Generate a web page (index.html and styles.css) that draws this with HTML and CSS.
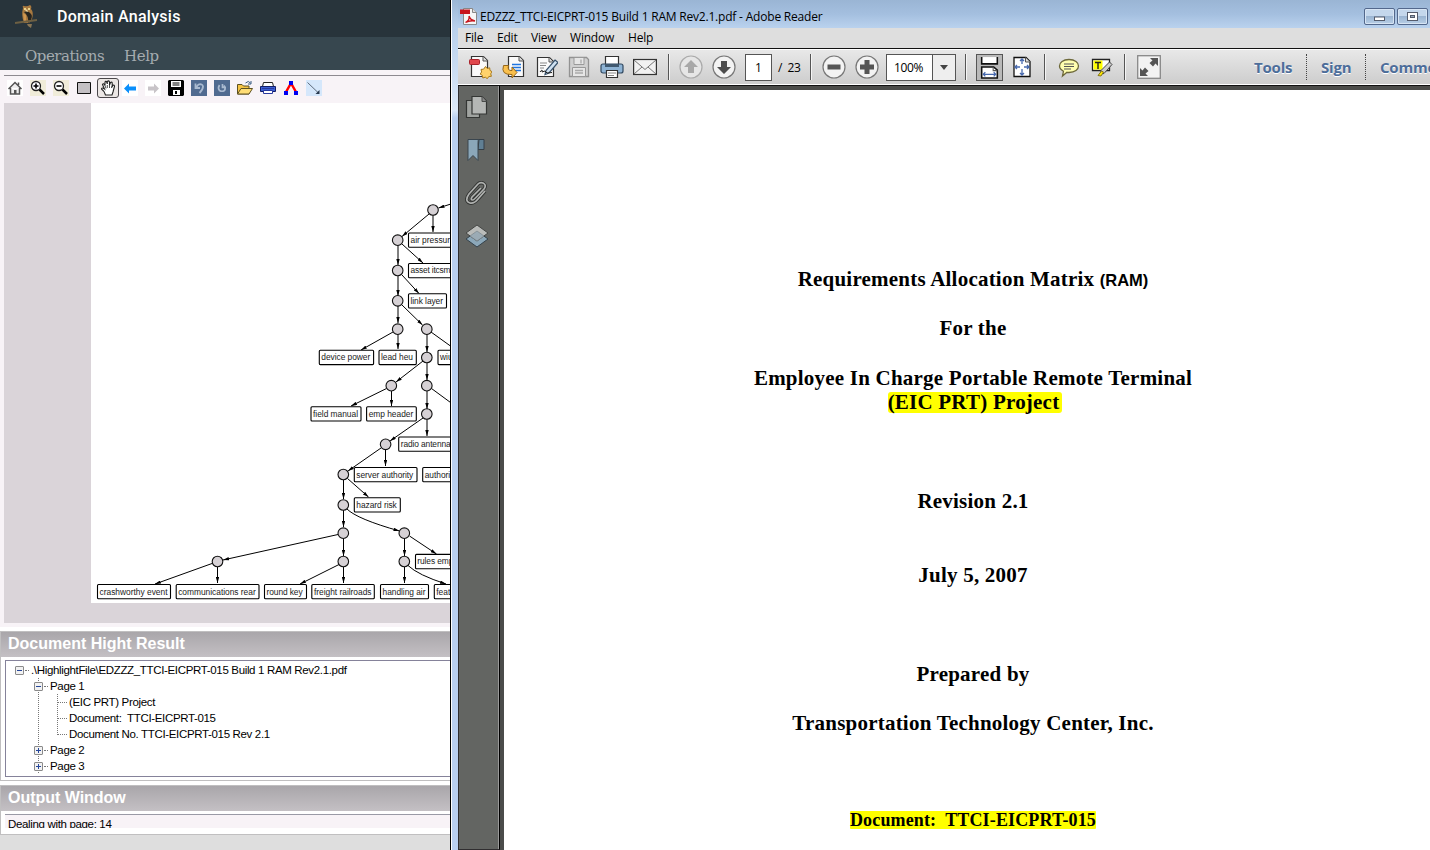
FILE: index.html
```html
<!DOCTYPE html>
<html lang="en">
<head>
<meta charset="utf-8">
<title>Domain Analysis</title>
<link rel="stylesheet" href="styles.css">
</head>
<body>
<div class="desktop">
<section class="app">
  <header class="app-title">
    <svg class="owl" width="24" height="24" viewBox="0 0 24 24"><path d="M8 3q-1-3 1-2 3 1 6-1 2 1 1 4 3 3 1 10l-3 4H9Q6 10 8 3" fill="#a8793f"/><path d="M12 6q7 3 4 9l-3 3q1-7-4-11" fill="#272520"/><path d="M8 8l3 2v7l-2-1" fill="#d09750"/><path d="M9 4h2M13 4h2" stroke="#fff0a0" stroke-width="1.5"/><path d="M10 6l2-2 1 3" fill="#ead6a4"/><path d="M0 18l7-1 8-1 7-1" stroke="#6e6043" stroke-width="1.8" fill="none"/><path d="M12 19h5l-1 4-3-2" fill="#8a7655"/></svg>
    <h1>Domain Analysis</h1>
  </header>
  <nav class="app-menu"><span class="m-op">Operations</span><span class="m-help">Help</span></nav>
  <div class="app-tools">
    <i><svg viewBox="0 0 16 16"><path fill="#fff" d="M0 0h16v16H0z"/><path d="M1.500 9L8 2.500 14.500 9M3.500 8v6h9V8M11.500 5V2.500" fill="#eee" stroke="#555" stroke-width="1.500"/><path d="M7 14v-4h2.500v4" fill="#555"/></svg></i>
    <i><svg viewBox="0 0 16 16"><path fill="#f0ecd9" d="M0 0h16v16H0z"/><circle cx="6" cy="6" r="4.500" fill="#fff" stroke="#222" stroke-width="1.300"/><path d="M3.500 6h5M6 3.500v5" stroke="#000" stroke-width="1.600"/><path d="M9.500 9.500L14 14" stroke="#000" stroke-width="2.500"/></svg></i>
    <i><svg viewBox="0 0 16 16"><path fill="#f0ecd9" d="M0 0h16v16H0z"/><circle cx="6" cy="6" r="4.500" fill="#fff" stroke="#222" stroke-width="1.300"/><path d="M3.500 6h5" stroke="#000" stroke-width="1.600"/><path d="M9.500 9.500L14 14" stroke="#000" stroke-width="2.500"/></svg></i>
    <i><svg viewBox="0 0 16 16"><path d="M1.500 2.500h13v11h-13z" fill="#c4c0c4" stroke="#111"/></svg></i>
    <i class="pressed"><svg viewBox="0 0 16 16"><path d="M5.500 15q-1-4-4-6 0-2 3 0L2.500 4.500q1-2 2.500 1L5 2q1.500-2 2.300 2V1.500q1.600-1.500 2.200.5v3l1-2.500q2-1 1.700 1v3l1-1.500q2 0 1 2.500L13 12l-1 3z" fill="#fff" stroke="#222" stroke-width="1.100"/><path d="M5 5.500l1 3M7.300 5v3M9.500 5v3M12 6l-.5 2" stroke="#222" stroke-width=".8"/></svg></i>
    <i><svg viewBox="0 0 16 16"><path fill="#fff" d="M0 0h16v16H0z"/><path d="M2 8.500l5-5v3h7v4H7v3z" fill="#0a8ffb"/></svg></i>
    <i><svg viewBox="0 0 16 16"><path fill="#fff" d="M0 0h16v16H0z"/><path d="M14 8.500l-5-5v3H3v4h6v3z" fill="#c8c4c8"/></svg></i>
    <i><svg viewBox="0 0 16 16"><path d="M1 0h14l1 1v14l-1 1H1l-1-1V1z" fill="#000"/><path d="M3 1h10v6H3zM5 10h7v5H5z" fill="#fff"/><path d="M4.500 3h7M4.500 5h7" stroke="#000"/><path d="M7 11h2v3H7z" fill="#000"/></svg></i>
    <i><svg viewBox="0 0 16 16"><path fill="#506b90" d="M0 0h16v16H0z"/><path d="M4.500 3.500V8H9M5 7.500l2.500-3q4-1 4.500 2 0 3-3.500 6.500" fill="none" stroke="#a9bad0" stroke-width="1.800"/></svg></i>
    <i><svg viewBox="0 0 16 16"><path fill="#506b90" d="M0 0h16v16H0z"/><path d="M8.500 4v3.500H12M5.500 5q-2 3 0 5.500 2.500 1.500 5 0Q12 8 10 5.500" fill="none" stroke="#a9bad0" stroke-width="1.700"/></svg></i>
    <i><svg viewBox="0 0 16 16"><path d="M.5 14V4.500H5L6.500 6H12v8z" fill="#f6c444" stroke="#5e5122"/><path d="M.5 14L4 8.500h11.500L12 14z" fill="#ffdd75" stroke="#5e5122"/><path d="M8.500 3q3-3 5 0M14 1v3h-3" fill="none" stroke="#375b82"/></svg></i>
    <i><svg viewBox="0 0 16 16"><path d="M3.500 2.500h9l1 4h-11z" fill="#fff" stroke="#222"/><path d="M.5 6.500h15v5H.5z" fill="#3b5fd4" stroke="#141e66"/><path d="M3.500 10.500h9v3h-9zM2 8.500h12" fill="#fff" stroke="#28399e"/></svg></i>
    <i><svg viewBox="0 0 16 16"><path d="M7.500 4L3 12M8.500 4l4.500 8" stroke="#f00" stroke-width="2.500"/><path d="M6 1h4v4H6zM1 11h4v4H1zM11 11h4v4h-4z" fill="#0000f2"/></svg></i>
    <i><svg viewBox="0 0 16 16"><path fill="#d5e7fb" d="M0 0h16v16H0z"/><path d="M1.500 2.500l11 10.500" stroke="#5d6b7d"/><path d="M13.500 10v4h-4z" fill="#27384e"/></svg></i>
  </div>
  <div class="canvas">
    <svg class="graph" width="359" height="500" viewBox="91 103 359 500">
      <defs><marker id="a" viewBox="0 0 7 4" refX="7" refY="2" markerWidth="6" markerHeight="3.500" markerUnits="userSpaceOnUse" orient="auto"><path d="M0 0l7 2-7 2z"/></marker></defs>
      <rect x="91" y="103" width="359" height="500" fill="#fff"/>
      <g class="edges">
        <path d="M454 203L438.500 208"/><path d="M429 214L402 236.500"/><path d="M433 215v17"/>
        <path d="M398 245v20"/><path d="M402 244l21 19"/><path d="M398 276v20"/><path d="M402 275l17 18.500"/>
        <path d="M398 306v17"/><path d="M402 305l20.500 20"/><path d="M393 332l-32 18"/><path d="M398 334v15"/>
        <path d="M427 334v18"/><path d="M431 332l25 18"/><path d="M423 361l-27 21"/><path d="M427 363v17"/>
        <path d="M386.500 388.500L351 406"/><path d="M391.500 391v15"/><path d="M427 391v18"/><path d="M431.500 388.500L458 408"/>
        <path d="M423 418l-33 23"/><path d="M427 419v17"/><path d="M381 448l-33 23"/><path d="M385.500 450v16"/>
        <path d="M343.500 480v19"/><path d="M347.500 478.500l21 18.500"/><path d="M343.500 510v17"/><path d="M347 509Q357 519 399.500 531"/>
        <path d="M338 534.500L223 560"/><path d="M343.500 538v18"/><path d="M404.500 538v18"/><path d="M409.500 536l27 18"/>
        <path d="M212 563.500L155 584"/><path d="M217.500 567v16"/><path d="M339 564.500L300 584"/><path d="M343.500 567v16"/><path d="M404.500 567v16"/><path d="M408 565.500Q418 575 446 584"/>
      </g>
      <g class="nodes">
        <circle cx="433" cy="210" r="5.300"/><circle cx="397.700" cy="240.200" r="5.300"/><circle cx="397.700" cy="270.500" r="5.300"/><circle cx="397.700" cy="300.800" r="5.300"/><circle cx="397.700" cy="329.200" r="5.300"/><circle cx="426.800" cy="329.200" r="5.300"/><circle cx="426.800" cy="357.500" r="5.300"/><circle cx="391.300" cy="385.700" r="5.300"/><circle cx="426.800" cy="385.700" r="5.300"/><circle cx="426.800" cy="414" r="5.300"/><circle cx="385.600" cy="444.300" r="5.300"/><circle cx="343.300" cy="474.500" r="5.300"/><circle cx="343.300" cy="505" r="5.300"/><circle cx="343.300" cy="533.200" r="5.300"/><circle cx="404.300" cy="533.200" r="5.300"/><circle cx="343.300" cy="561.500" r="5.300"/><circle cx="404.300" cy="561.500" r="5.300"/><circle cx="217.500" cy="561.500" r="5.300"/>
      </g>
      <g class="boxes">
        <rect x="408.500" y="233" width="60" height="14.300" rx="1"/><rect x="408.500" y="263.500" width="60" height="14.300" rx="1"/><rect x="408.500" y="293.700" width="38" height="14.300" rx="1"/>
        <rect x="319.300" y="350.300" width="54.300" height="14.300" rx="1"/><rect x="379" y="350.300" width="37.300" height="14.300" rx="1"/><rect x="438" y="350.300" width="40" height="14.300" rx="1"/>
        <rect x="311" y="406.700" width="50" height="14.300" rx="1"/><rect x="366.600" y="406.700" width="49.700" height="14.300" rx="1"/>
        <rect x="398.700" y="437" width="60" height="14.300" rx="1"/><rect x="354.300" y="467.500" width="62.700" height="14.300" rx="1"/><rect x="422.700" y="467.500" width="50" height="14.300" rx="1"/>
        <rect x="354.300" y="497.700" width="46" height="14.300" rx="1"/><rect x="415.500" y="554.400" width="60" height="14.300" rx="1"/>
        <rect x="97.500" y="584.500" width="73" height="14.300" rx="1"/><rect x="176.200" y="584.500" width="82.800" height="14.300" rx="1"/><rect x="264.500" y="584.500" width="42" height="14.300" rx="1"/><rect x="311.800" y="584.500" width="62.500" height="14.300" rx="1"/><rect x="380.500" y="584.500" width="48" height="14.300" rx="1"/><rect x="434.300" y="584.500" width="50" height="14.300" rx="1"/>
      </g>
      <g class="labels">
        <text x="410.500" y="243" textLength="39.500">air pressur</text><text x="410.500" y="273.300" textLength="40">asset itcsm</text><text x="410.500" y="303.600" textLength="32.500">link layer</text>
        <text x="321.300" y="360.200" textLength="49">device power</text><text x="381" y="360.200" textLength="32">lead heu</text><text x="440" y="360.200">wiu</text>
        <text x="313" y="416.700" textLength="45">field manual</text><text x="368.700" y="416.700" textLength="44.500">emp header</text><text x="400.700" y="447" textLength="50">radio antenna</text>
        <text x="356.300" y="477.500" textLength="57">server authority</text><text x="424.700" y="477.500" textLength="25.500">authori</text><text x="356.300" y="507.700" textLength="40.500">hazard risk</text><text x="417.300" y="564.300" textLength="36">rules emp</text>
        <text x="99.500" y="594.500" textLength="68">crashworthy event</text><text x="178.200" y="594.500" textLength="77.500">communications rear</text><text x="266.600" y="594.500" textLength="36">round key</text><text x="314" y="594.500" textLength="57.500">freight railroads</text><text x="382.500" y="594.500" textLength="43">handling air</text><text x="436.300" y="594.500">feat</text>
      </g>
    </svg>
  </div>
  <section class="panel results">
    <h2>Document Hight Result</h2>
    <div class="tree">
      <div class="row lv0"><b class="box"></b><u></u><span>.\HighlightFile\EDZZZ_TTCI-EICPRT-015 Build 1 RAM Rev2.1.pdf</span></div>
      <div class="branch">
        <div class="row"><b class="box"></b><u></u><span>Page 1</span></div>
        <div class="leaves">
          <div class="row leaf"><u></u><span>(EIC PRT) Project</span></div>
          <div class="row leaf"><u></u><span>Document:&nbsp; TTCI-EICPRT-015</span></div>
          <div class="row leaf"><u></u><span>Document No. TTCI-EICPRT-015 Rev 2.1</span></div>
        </div>
        <div class="row"><b class="box plus"></b><u></u><span>Page 2</span></div>
        <div class="row"><b class="box plus"></b><u></u><span>Page 3</span></div>
      </div>
    </div>
  </section>
  <section class="panel output">
    <h2>Output Window</h2>
    <div class="log">Dealing with page: 14</div>
  </section>
  <div class="app-foot"></div>
</section>

<section class="reader">
  <div class="frame"></div>
  <div class="window">
    <header class="titlebar">
      <svg width="17" height="17" viewBox="0 0 17 17"><path d="M3.500.5h9l4 4v12h-13z" fill="#f6f6f6" stroke="#888"/><path d="M12.500.5v4h4" fill="#ddd" stroke="#888"/><path d="M0 1.500h10v4.500H0z" fill="#c8141c"/><path d="M5.500 14.500q4.500-2.500 3.500-6.500 1 4 6 5-5-1-9.500 1.500" fill="none" stroke="#c8141c" stroke-width="1.400"/></svg>
      <span class="caption">EDZZZ_TTCI-EICPRT-015 Build 1 RAM Rev2.1.pdf - Adobe Reader</span>
      <span class="winbtn"><svg width="29" height="15" viewBox="0 0 29 15"><rect x="9.500" y="8" width="10" height="3.500" fill="#fff" stroke="#555c6c"/></svg></span>
      <span class="winbtn"><svg width="29" height="15" viewBox="0 0 29 15"><rect x="9.500" y="3.500" width="10" height="8" fill="#fff" stroke="#555c6c"/><rect x="12.500" y="6.500" width="4" height="2" fill="#9ab" stroke="#555c6c"/></svg></span>
    </header>
    <nav class="menubar"><span>File</span><span>Edit</span><span>View</span><span>Window</span><span>Help</span></nav>
    <div class="toolbar">
      <i class="t"><svg viewBox="0 0 24 24"><path d="M3.500 1.500h12l4 4v16h-16z" fill="#fafafa" stroke="#333" stroke-width="1.200"/><path d="M15 1.500v4.500h4.500" fill="#ddd" stroke="#555"/><rect x="1.500" y="4.500" width="10" height="5" rx="1" fill="#e0474d" stroke="#a8222a"/><path d="M17.500 11.500l1.700 2 2.500-.7.300 2.600 2.200 1.400-1.500 2 .7 2.500-2.600.2-1.500 2.200-2-1.500-2.500.8-.4-2.600-2.200-1.300 1.400-2.200-.6-2.500 2.600-.2z" fill="#ffd26b" stroke="#a87a1e"/></svg></i>
      <i class="t"><svg viewBox="0 0 24 24"><path d="M7.500 1.500h11l4 4v16h-15z" fill="#fafafa" stroke="#333" stroke-width="1.200"/><path d="M18 1.500v4.500h4.500" fill="#ddd" stroke="#555"/><path d="M11 9.500h9M11 12.500h9M11 15.500h9" stroke="#1f75e0" stroke-width="1.500"/><path d="M2.500 10.500h5q-1.500 5.500 3.500 5v-3.500l5 5.500-5 5.500v-3.500Q-.5 20 2.500 10.500" fill="#f9c04e" stroke="#96671a"/></svg></i>
      <i class="t"><svg viewBox="0 0 24 24"><path d="M3.500 2.500h12l4 4v15h-16z" fill="#fafafa" stroke="#333" stroke-width="1.200"/><path d="M15 2.500v4.500h4" fill="#ddd" stroke="#555"/><path d="M6 8h7M6 10.500h6M6 13h4" stroke="#888"/><path d="M21 5l3 2.500-9 10.500-4 1.500 1-4z" fill="#d0e2f2" stroke="#37516b" stroke-width="1.200"/><path d="M6 17q3-4 2 0l3-1 2 2 5-.5" fill="none" stroke="#222"/></svg></i>
      <i class="t"><svg viewBox="0 0 24 24"><path d="M2.500 2.500h17l2 2v17h-19z" fill="#d0d0d0" stroke="#929292" stroke-width="1.300"/><path d="M7 2.500h10v7H7zM5.500 12.500h13v9h-13z" fill="#e6e6e6" stroke="#999"/><path d="M14 4.500v4M8 15.500h8M8 18h8" stroke="#aaa" stroke-width="1.300"/></svg></i>
      <i class="t"><svg viewBox="0 0 24 24"><path d="M5.500 10V1.500h13V10" fill="#fff" stroke="#333" stroke-width="1.200"/><rect x="1" y="9" width="22" height="9" rx="2" fill="#8eb3d4" stroke="#304860" stroke-width="1.200"/><path d="M5 9h14v3H5z" fill="#405970"/><path d="M6.500 15.500h11v7h-11z" fill="#fff" stroke="#333" stroke-width="1.200"/><path d="M8 18h8M8 20.500h6" stroke="#888"/></svg></i>
      <i class="t"><svg viewBox="0 0 24 24"><rect x=".6" y="4.500" width="22.800" height="15" fill="#f2f2f2" stroke="#333" stroke-width="1.200"/><path d="M1 5l11 9.500L23 5M1 19l8-7M23 19l-8-7" fill="none" stroke="#777"/></svg></i>
      <s class="s1"></s>
      <i class="t"><svg viewBox="0 0 24 24"><circle cx="12" cy="12" r="11" fill="#e6e6e6" stroke="#aaa" stroke-width="1.200"/><path d="M12 5l7 7h-4v6H9v-6H5z" fill="#a8a8a8"/></svg></i>
      <i class="t"><svg viewBox="0 0 24 24"><circle cx="12" cy="12" r="11" fill="#f3f3f3" stroke="#777" stroke-width="1.200"/><path d="M12 19l7-7h-4V6H9v6H5z" fill="#4c4c4c"/></svg></i>
      <span class="pagebox">1</span><span class="count">/&nbsp; 23</span>
      <s class="s2"></s>
      <i class="t"><svg viewBox="0 0 24 24"><circle cx="12" cy="12" r="11" fill="#f3f3f3" stroke="#777" stroke-width="1.200"/><path d="M5.500 9.500h13v5h-13z" fill="#555"/></svg></i>
      <i class="t"><svg viewBox="0 0 24 24"><circle cx="12" cy="12" r="11" fill="#f3f3f3" stroke="#777" stroke-width="1.200"/><path d="M9.500 5h5v4.500H19v5h-4.500V19h-5v-4.500H5v-5h4.500z" fill="#555"/></svg></i>
      <span class="zoombox"><span>100%</span><em><svg width="8" height="5" viewBox="0 0 8 5"><path d="M0 0h8L4 5z" fill="#444"/></svg></em></span>
      <s class="s3"></s>
      <i class="fitw"><svg viewBox="0 0 24 24"><path d="M4.500 2v6.500h15V2" fill="#fff" stroke="#111" stroke-width="1.500"/><path d="M4.500 22V11.500H16l3.500 3V22z" fill="#fff" stroke="#111" stroke-width="1.500"/><path d="M15.500 11.500v3.500h4" fill="none" stroke="#555"/><path d="M6 18.500h12M8 16.500l-2 2 2 2M16 16.500l2 2-2 2" fill="none" stroke="#4769ae" stroke-width="1.200"/></svg></i>
      <i class="t fitp"><svg viewBox="0 0 24 24"><path d="M4 2.500h12l4 4v15H4z" fill="#fff" stroke="#111" stroke-width="1.300"/><path d="M15.500 2.500v4.500H20" fill="#ddd" stroke="#555"/><path d="M12 4v5M12 14v6M5 12h5M14 12h5M10 6l2-2 2 2M10 18l2 2 2-2M7 10l-2 2 2 2M17 10l2 2-2 2" fill="none" stroke="#4769ae" stroke-width="1.300"/></svg></i>
      <s class="s4"></s>
      <i class="t cm"><svg viewBox="0 0 24 24"><path d="M12 4.500c6 0 9.500 3 9.500 6.500s-3.500 6.500-9.500 6.500q-1 0-2-.2L5.500 21l1-4.800Q2.500 14 2.500 11C2.500 7.500 6 4.500 12 4.500z" fill="#ffffb0" stroke="#6d693b" stroke-width="1.300"/><path d="M7 9h10M7 11.500h10M7 14h7" stroke="#555"/></svg></i>
      <i class="t"><svg viewBox="0 0 24 24"><path d="M2.500 4.500h17v11h-17z" fill="#fff" stroke="#222" stroke-width="1.300"/><path d="M3.500 5.500h9v9h-9z" fill="#ff0"/><path d="M5 7.500h6M8 7.500V14" stroke="#222" stroke-width="1.400"/><path d="M19.500 7l2.500 2.500-8 9-3.500.5.500-3.500z" fill="#ccc" stroke="#444"/><path d="M8 20.500l3.500-4.500 2 1-2.500 4z" fill="#ffe900" stroke="#85751a"/></svg></i>
      <s class="s5"></s>
      <i class="full"><svg viewBox="0 0 24 24"><rect x=".7" y=".7" width="22.600" height="22.600" fill="#f3f3f3" stroke="#888" stroke-width="1.300"/><path d="M13 3h8v8l-2.500-2.500-2.500 3-3.500-3.500 3-2.500zM3 21v-8l2.500 2.500 2.500-3 3.500 3.500-3 2.500L11 21z" fill="#555"/></svg></i>
      <span class="panes"><b class="p1">Tools</b><b class="p2">Sign</b><b class="p3">Comment</b></span>
    </div>
    <div class="body">
      <aside class="rail">
        <svg viewBox="0 0 24 24"><path d="M1.500 5.500h13v17h-13z" fill="#a0a3a0" stroke="#343634" stroke-width="1.200"/><path d="M7 1.500h10l4.500 4.500v13H7z" fill="#b5b7b5" stroke="#343634" stroke-width="1.200"/><path d="M17 1.500v5h4.500" fill="#888" stroke="#494b49"/></svg>
        <svg viewBox="0 0 24 24"><path d="M14 1.500h5v10h-6z" fill="#607f94" stroke="#343f48"/><path d="M3 1.500h11q-1 0-1 3v18l-5-5-5 5z" fill="#8ba7b9" stroke="#3a464f"/></svg>
        <svg viewBox="0 0 24 24"><g fill="none" stroke="#343634" stroke-width="3.500"><path d="M16 7l-9 9q-2 3 1 3 1 0 11-11 3-4-1-6-3-1-5 1L4 13q-5 7 1 9 4 1 8-4l7-8"/></g><path d="M16 7l-9 9q-2 3 1 3 1 0 11-11 3-4-1-6-3-1-5 1L4 13q-5 7 1 9 4 1 8-4l7-8" fill="none" stroke="#b0b2b0" stroke-width="1.700"/></svg>
        <svg viewBox="0 0 24 24"><path d="M12 7l11 8-11 8-11-8z" fill="#8ba7b9" stroke="#35434c"/><path d="M12 1l11 8-11 8L1 9z" fill="#babcba" stroke="#454745"/><path d="M12 7l7 5-7 5-7-5z" fill="#9babb5" stroke="#7b858c" stroke-width=".7"/></svg>
      </aside>
      <div class="docwell">
        <article class="page">
          <p>Requirements Allocation Matrix <span class="ram">(RAM)</span></p>
          <p class="g1">For the</p>
          <p class="g1">Employee In Charge Portable Remote Terminal</p>
          <p><mark>(EIC PRT) Project</mark></p>
          <p class="g3">Revision 2.1</p>
          <p class="g2">July 5, 2007</p>
          <p class="g3">Prepared by</p>
          <p class="g1">Transportation Technology Center, Inc.</p>
          <p class="docno"><mark>Document:&nbsp; TTCI-EICPRT-015</mark></p>
        </article>
      </div>
    </div>
  </div>
</section>
</div>
</body>
</html>
```
FILE: styles.css
```css
* { box-sizing: border-box; }
body { margin: 0; overflow: hidden; }
h1, h2, p { margin: 0; }
i, em { font-style: normal; }
svg { display: block; }
.desktop { display: flex; width: 1430px; height: 850px; overflow: hidden; background: #dedede; }

/* analysis application */
.app { width: 450px; flex: none; display: flex; flex-direction: column; overflow: hidden; background: #fff; font-family: "Liberation Sans", Arial, sans-serif; }
.app-title { height: 37px; flex: none; display: flex; align-items: flex-start; padding: 5px 0 0 15px; background: #28343b; }
.app-title h1 { margin-left: 18px; color: #fff; font: 500 16px/23px Roboto, sans-serif; letter-spacing: .28px; }
.app-menu { height: 33px; flex: none; display: flex; gap: 20px; padding: 9px 0 0 25px; background: #37474f; color: #a5acaf; font: 15px/20px "DejaVu Serif", serif; letter-spacing: -.4px; }
.m-op { width: 79px; letter-spacing: -.5px; }
.app-tools { height: 33px; flex: none; display: flex; align-items: center; gap: 1px; padding-bottom: 3px; border: solid #f8f3f7; border-width: 5px 0 0 4px; background: linear-gradient(#8e8a90 1px, #f8f3f7 1px) padding-box; }
.app-tools i { width: 22px; height: 20px; display: flex; align-items: center; justify-content: center; }
.app-tools i svg { width: 16px; height: 16px; }
.app-tools .pressed { border: 1px solid #4a464a; border-radius: 3px; background: #ece7e5; margin: 0 1px 0 1px; width: 22px; }
.app-tools .pressed + i { margin-left: -2px; }
.canvas { height: 524px; flex: none; padding-left: 87px; background: #dad4d9; border: solid #f8f3f7; border-width: 0 0 4px 4px; }
.edges path { fill: none; stroke: #000; stroke-width: 1; marker-end: url(#a); }
.nodes circle { fill: #d6d1d5; stroke: #111; stroke-width: 1.1; }
.boxes rect { fill: #fff; stroke: #000; stroke-width: 1.1; }
.labels { font: 8.4px "Liberation Sans", Arial, sans-serif; fill: #1a1a1a; }

.panel { flex: none; border: solid #c0bfc0; border-width: 1px 0 1px 1px; }
.panel h2 { height: 25px; padding-left: 7px; color: #fff; font: bold 16px/24px "Liberation Sans", Arial, sans-serif; background: linear-gradient(#a9a6aa, #c4c0c4); }
.results { height: 150px; margin-top: 4px; }
.tree { height: 117px; margin: 3px 0 0 4px; padding: 1px 0 0 9px; border: solid #85829a; border-width: 1px 0 1px 1px; overflow: hidden; font-size: 11.5px; line-height: 16px; letter-spacing: -.34px; color: #000; }
.row { display: flex; align-items: center; height: 16px; white-space: pre; }
.row u { width: 4px; margin: 0 3px 0 1px; border-top: 1px dotted #777; }
.box { width: 9px; height: 9px; border: 1px solid #8a8a8a; border-radius: 1px; background: linear-gradient(#26479a, #26479a) center / 5px 1px no-repeat #f2f2f2; }
.box.plus { background: linear-gradient(#26479a, #26479a) center / 5px 1px no-repeat, linear-gradient(#26479a, #26479a) center / 1px 5px no-repeat #f2f2f2; }
.lv0 u { margin-right: 2px; }
.branch { padding-left: 19px; background: repeating-linear-gradient(#777 0 1px, transparent 1px 2px) 23px 0 / 1px 100% no-repeat; }
.branch .row u { margin-right: 2px; }
.leaves { margin-left: 23px; height: 48px; background: repeating-linear-gradient(#777 0 1px, transparent 1px 2px) 0 0 / 1px 41px no-repeat; }
.branch .leaf u { width: 9px; margin: 0 2px 0 1px; }
.output { height: 50px; margin-top: 4px; }
.output h2 { letter-spacing: -.02px; }
.log { height: 14px; margin: 3px 0 0 4px; padding: 3px 0 0 3px; overflow: hidden; border-top: 1px solid #9a9aa6; background: #f8f3f7; font-size: 11.5px; line-height: 13px; letter-spacing: -.34px; }
.app-foot { flex: 1; background: #dedede; }

/* document reader */
.reader { flex: 1; min-width: 0; display: flex; border-left: 1px solid #000; background: #bad0ec; font-family: "Open Sans", "Noto Sans", sans-serif; }
.frame { width: 7px; flex: none; border-left: 1px solid #fff; background: linear-gradient(#9bb6d5, #b9d0ec 28px, #dce9f8 110px, #bad0f0 118px); }
.window { flex: 1; min-width: 0; display: flex; flex-direction: column; }
.titlebar { height: 28px; flex: none; display: flex; padding: 8px 0 0 2px; background: linear-gradient(#9ab5d4, #a4bfdf 50%, #bad2ee); }
.caption { margin-left: 3px; width: 884px; font-size: 12px; line-height: 18px; letter-spacing: -.2px; white-space: nowrap; color: #000; }
.winbtn { width: 31px; height: 17px; margin-right: 2px; flex: none; border: 1px solid #53688c; border-radius: 2px; background: linear-gradient(#c4d7ec 48%, #9bb5d2 50%, #b8cfe7); box-shadow: inset 0 0 0 1px #d7e5f4; }
.menubar { height: 20px; flex: none; display: flex; padding-left: 7px; background: #dedede; font-size: 12px; line-height: 19px; letter-spacing: -.2px; }
.menubar span:nth-child(1) { width: 32px; }
.menubar span:nth-child(2) { width: 34px; }
.menubar span:nth-child(3) { width: 39px; }
.menubar span:nth-child(4) { width: 58px; }
.toolbar { height: 38px; flex: none; display: flex; align-items: center; padding-left: 5px; border-top: 1px solid #111; border-bottom: 1px solid #111; background: linear-gradient(#fff 1px, #e8e8e8 1px, #cdcdcd 35px, #fff 35px); overflow: hidden; }
.t { width: 33px; flex: none; display: flex; justify-content: center; }
.t svg { width: 24px; height: 24px; }
.toolbar s { width: 2px; height: 26px; flex: none; background: linear-gradient(90deg, #555 50%, #f5f5f5 50%); }
.s1 { margin: 0 4px 0 7px; }
.pagebox { width: 27px; height: 27px; flex: none; margin-left: 5px; border: 1px solid #555; background: #fff; font-size: 12px; line-height: 25px; text-align: center; }
.count { width: 31px; flex: none; margin-left: 6px; font-size: 12px; white-space: nowrap; letter-spacing: -.4px; }
.s2 { margin: 0 5px 0 1px; }
.zoombox { width: 70px; height: 27px; flex: none; display: flex; margin-left: 3px; border: 1px solid #555; background: #fff; font-size: 12px; line-height: 25px; letter-spacing: -.4px; }
.zoombox > span { width: 46px; padding-left: 7px; border-right: 1px solid #555; }
.zoombox em { flex: 1; display: flex; align-items: center; justify-content: center; background: #eee; }
.s3 { margin: 0 9px 0 9px; }
.fitw { width: 27px; height: 27px; flex: none; border: 1px solid #555; background: #b9b9b9; }
.fitp { width: 24px; margin-left: 7px; }
.s4 { margin: 0 5px 0 10px; }
.cm { margin-left: 1px; }
.s5 { margin: 0 11px 0 6px; }
.full { width: 24px; flex: none; }
.panes { display: flex; margin-left: 93px; color: #4d6d9a; font-size: 15px; line-height: 26px; letter-spacing: -.2px; text-shadow: 0 1px #fff; }
.p1 { width: 53px; border-right: 1px dotted #444; }
.p2 { width: 59px; padding-left: 14px; border-right: 1px dotted #444; }
.p3 { padding-left: 14px; }

.body { flex: 1; display: flex; min-height: 0; }
.rail { width: 42px; flex: none; display: flex; flex-direction: column; align-items: center; gap: 19px; padding: 9px 4px 0 0; background: #636562; border: solid #302e30; border-width: 0 1px 1px; border-right-color: #000; box-shadow: inset -1px 0 #999; }
.rail svg { width: 24px; height: 24px; }
.docwell { flex: 1; min-width: 0; padding: 4px 0 0 4px; background: #4b4c4a; overflow: hidden; }
.page { width: 938px; height: 760px; padding-top: 177px; background: #fff; text-align: center; color: #000; font: bold 21px/24.67px "Liberation Serif", "Times New Roman", serif; letter-spacing: .22px; }
.ram { font: bold 16.5px "Liberation Sans", Arial, sans-serif; letter-spacing: 0; }
.page mark { margin-left: 4px; background: #ff0; color: #000; padding: 0 3px 0 0; line-height: 21px; display: inline-block; border-radius: 3px; }
.g1 { padding-top: 24.67px; }
.g2 { padding-top: 49.34px; }
.g3 { padding-top: 74px; }
.docno { padding-top: 72.5px; font-size: 18px; letter-spacing: .14px; }
.page .docno mark { margin: 0; padding: 0; line-height: 18px; border-radius: 1px; }
```
